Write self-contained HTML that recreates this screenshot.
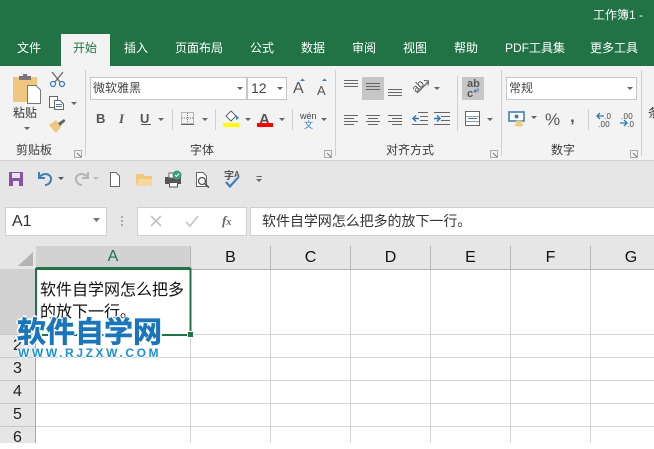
<!DOCTYPE html>
<html><head><meta charset="utf-8">
<style>
html,body{margin:0;padding:0}
body{width:654px;height:443px;position:relative;overflow:hidden;background:#fff;font-family:"Liberation Sans","Noto Sans CJK SC",sans-serif;color:#333}
.a{position:absolute}
.t{position:absolute;white-space:nowrap;line-height:1}
.tab{color:#fff;font-size:12px;top:42px}
.g{color:#3a3a3a;font-size:12px;top:144px}
.ch{position:absolute;top:246px;height:23px;line-height:23px;text-align:center;font-size:16px;color:#111;background:#e6e6e6;border-right:1px solid #b5b5b5;box-sizing:border-box}
.rh{position:absolute;left:0;width:36px;text-align:center;font-size:16px;color:#222;background:#e6e6e6;border-bottom:1px solid #c8c8c8;box-sizing:border-box;border-right:1px solid #a8a8a8}
svg{position:absolute;left:0;top:0}
</style></head><body>
<div class="a" style="left:0;top:0;width:654px;height:66px;background:#217346"></div>
<div class="a" style="left:61px;top:34px;width:49px;height:32px;background:#f3f3f3"></div>
<div class="t" style="left:593px;top:9px;color:#fff;font-size:12px">工作簿1 -</div>
<div class="t tab" style="left:17px">文件</div>
<div class="t tab" style="left:73px;color:#217346">开始</div>
<div class="t tab" style="left:124px">插入</div>
<div class="t tab" style="left:175px">页面布局</div>
<div class="t tab" style="left:250px">公式</div>
<div class="t tab" style="left:301px">数据</div>
<div class="t tab" style="left:352px">审阅</div>
<div class="t tab" style="left:403px">视图</div>
<div class="t tab" style="left:454px">帮助</div>
<div class="t tab" style="left:505px">PDF工具集</div>
<div class="t tab" style="left:590px">更多工具</div>

<div class="a" style="left:0;top:66px;width:654px;height:94px;background:#f3f3f3"></div>
<div class="a" style="left:0;top:160px;width:654px;height:86px;background:#e6e6e6;border-top:1px solid #d2d2d2;box-sizing:border-box"></div>

<!-- font boxes -->
<div class="a" style="left:90px;top:77px;width:157px;height:23px;background:#fff;border:1px solid #c6c6c6;box-sizing:border-box"></div>
<div class="a" style="left:247px;top:77px;width:40px;height:23px;background:#fff;border:1px solid #c6c6c6;box-sizing:border-box"></div>
<div class="t" style="left:93px;top:82px;font-size:12px;color:#444">微软雅黑</div>
<div class="t" style="left:251px;top:81px;font-size:14px;color:#444">12</div>
<div class="a" style="left:506px;top:77px;width:131px;height:23px;background:#fff;border:1px solid #c6c6c6;box-sizing:border-box"></div>
<div class="t" style="left:509px;top:82px;font-size:12px;color:#444">常规</div>
<div class="a" style="left:362px;top:77px;width:22px;height:23px;background:#c6c6c6"></div>
<div class="a" style="left:462px;top:77px;width:22px;height:23px;background:#c6c6c6"></div>

<div class="t" style="left:13px;top:107px;font-size:12px;color:#333">粘贴</div>
<div class="t g" style="left:16px">剪贴板</div>
<div class="t g" style="left:190px">字体</div>
<div class="t g" style="left:386px">对齐方式</div>
<div class="t g" style="left:551px">数字</div>
<div class="t" style="left:648px;top:107px;font-size:12px;color:#333">条</div>

<div class="t" style="left:96px;top:112px;font-size:13px;font-weight:bold;color:#555">B</div>
<div class="t" style="left:119px;top:112px;font-size:13px;font-style:italic;font-weight:bold;font-family:'Liberation Serif',serif;color:#555">I</div>
<div class="t" style="left:140px;top:112px;font-size:13px;font-weight:bold;color:#555">U</div>
<div class="t" style="left:293px;top:81px;font-size:16px;color:#555">A</div>
<div class="t" style="left:317px;top:84px;font-size:13px;color:#555">A</div>
<div class="t" style="left:259px;top:112px;font-size:15px;font-weight:bold;color:#555">A</div>
<div class="t" style="left:300px;top:112px;font-size:9px;color:#444">wén</div>
<div class="t" style="left:304px;top:121px;font-size:9px;color:#2b79b8">文</div>
<div class="t" style="left:467px;top:79px;font-size:11px;font-weight:bold;color:#555;line-height:10px;white-space:pre">ab
c</div>
<div class="t" style="left:545px;top:111px;font-size:17px;color:#555">%</div>
<div class="t" style="left:570px;top:108px;font-size:17px;font-weight:bold;color:#555">,</div>
<div class="t" style="left:604px;top:113px;font-size:8px;color:#444;letter-spacing:.3px">.0</div>
<div class="t" style="left:598px;top:121px;font-size:8px;color:#444;letter-spacing:.3px">.00</div>
<div class="t" style="left:621px;top:113px;font-size:8px;color:#444;letter-spacing:.3px">.00</div>
<div class="t" style="left:627px;top:121px;font-size:8px;color:#444;letter-spacing:.3px">.0</div>
<div class="t" style="left:224px;top:172px;font-size:10px;font-weight:bold;color:#555">字</div>
<div class="t" style="left:234px;top:171px;font-size:8px;font-weight:bold;color:#555">A</div>

<!-- formula bar -->
<div class="a" style="left:5px;top:207px;width:102px;height:29px;background:#fff;border:1px solid #cfcfcf;box-sizing:border-box"></div>
<div class="t" style="left:12px;top:214px;font-size:16px;color:#333">A1</div>
<div class="a" style="left:137px;top:207px;width:110px;height:29px;background:#fff;border:1px solid #cfcfcf;box-sizing:border-box"></div>
<div class="a" style="left:250px;top:207px;width:404px;height:29px;background:#fff;border:1px solid #cfcfcf;border-right:0;box-sizing:border-box"></div>
<div class="t" style="left:262px;top:214px;font-size:14px;color:#333;letter-spacing:-.05px">软件自学网怎么把多的放下一行。</div>
<div class="t" style="left:222px;top:214px;font-size:13px;font-style:italic;font-weight:bold;font-family:'Liberation Serif',serif;color:#666">f<span style="font-size:10px">x</span></div>

<!-- sheet -->
<div class="a" style="left:0;top:246px;width:654px;height:197px;background:#fff"></div>
<div class="a" style="left:0;top:246px;width:36px;height:23px;background:#e6e6e6"></div>
<div class="ch" style="left:36px;width:155px;background:#d2d2d2;color:#217346;border-bottom:2px solid #217346;line-height:22px">A</div>
<div class="ch" style="left:191px;width:80px">B</div>
<div class="ch" style="left:271px;width:80px">C</div>
<div class="ch" style="left:351px;width:80px">D</div>
<div class="ch" style="left:431px;width:80px">E</div>
<div class="ch" style="left:511px;width:80px">F</div>
<div class="ch" style="left:591px;width:80px;border-right:0">G</div>
<div class="a" style="left:0;top:269px;width:654px;height:1px;background:#b5b5b5"></div>
<div class="rh" style="top:269px;height:66px;background:#d2d2d2"></div>
<div class="rh" style="top:335px;height:23px;line-height:22px">2</div>
<div class="rh" style="top:358px;height:23px;line-height:22px">3</div>
<div class="rh" style="top:381px;height:23px;line-height:22px">4</div>
<div class="rh" style="top:404px;height:23px;line-height:22px">5</div>
<div class="rh" style="top:427px;height:16px;line-height:22px;border-bottom:0">6</div>

<svg width="654" height="443" viewBox="0 0 654 443" fill="none">
<!-- gridlines -->
<g stroke="#d4d4d4"><path d="M36 334.500H654M36 357.500H654M36 380.500H654M36 403.500H654M36 426.500H654"/><path d="M190.500 270V443M270.500 270V443M350.500 270V443M430.500 270V443M510.500 270V443M590.500 270V443"/></g>
<!-- corner triangle -->
<path d="M33 252V266H18Z" fill="#b4b4b4"/>
<!-- ribbon separators -->
<g stroke="#d0d0d0"><path d="M85.500 70V156M335.500 70V156M501.500 70V156M641.500 70V156"/><path d="M172.500 109V130M215.500 109V130M292.500 109V130M457.500 76V131M588.500 109V130"/></g>
<path d="M0 160.500H654" stroke="#d2d2d2"/>
<!-- clipboard -->
<path d="M13 77H37V102H13Z" fill="#efc77e"/>
<rect x="19" y="76" width="12" height="4" fill="#777"/><rect x="23" y="74" width="4" height="3" fill="#777"/>
<path d="M27.500 85.500H36L40.500 90V103.500H27.500Z" fill="#fff" stroke="#777"/>
<!-- scissors -->
<g stroke="#666" stroke-width="1.300"><path d="M52 72L60 82M63 72L55 82"/></g>
<circle cx="53" cy="84" r="2.500" stroke="#3f7fb8" stroke-width="1.300"/><circle cx="62" cy="84" r="2.500" stroke="#3f7fb8" stroke-width="1.300"/>
<!-- copy -->
<rect x="49.500" y="96.500" width="8" height="11" fill="#fff" stroke="#666"/><path d="M54.500 100.500H60L63.500 104V109.500H54.500Z" fill="#fff" stroke="#666"/><path d="M56 104.500H62M56 106.500H62" stroke="#3f7fb8"/>
<!-- brush -->
<path d="M49 125L56 120L61 127L56 133Z" fill="#efc77e"/><path d="M58 123L64 119L65.500 121L60 126Z" fill="#666"/>
<!-- small carets -->
<g fill="#666">
<path d="M24 127h6l-3 3zM71 102h6l-3 3zM237 87h6l-3 3zM277 87h6l-3 3zM158 118h6l-3 3zM202 118h6l-3 3zM245 118h6l-3 3zM279 118h6l-3 3zM321 118h6l-3 3zM627 87h6l-3 3zM487 118h6l-3 3zM531 116h6l-3 3z"/>
</g>
<path d="M93 218h7l-3.500 4z" fill="#777"/>
<!-- font grow/shrink -->
<path d="M300 81l2.500-2.500 2.500 2.500zM322 81l2.500-2.500 2.500 2.500z" fill="#3f7fb8"/>
<!-- border icon -->
<rect x="181.500" y="112.500" width="12" height="11" stroke="#777" stroke-dasharray="1 1"/><path d="M187.500 113V123M182 118H193" stroke="#777" stroke-dasharray="1 1"/><path d="M181 124.500H194" stroke="#666"/>
<path d="M141 124.500H151" stroke="#555"/>
<!-- fill -->
<path d="M226 116L231 111L236 116L231 121Z" fill="#fff" stroke="#666"/><path d="M236 115L239 118L236 120Z" fill="#3f7fb8"/>
<rect x="223" y="123" width="16" height="4" fill="#ffff00"/>
<rect x="257" y="123" width="16" height="4" fill="#ff0000"/>
<!-- align -->
<g stroke="#666"><path d="M344 80.500H358M344 83.500H358M344 86.500H358"/><path d="M366 83.500H380M366 86.500H380M366 89.500H380"/><path d="M388 89.500H402M388 92.500H402M388 95.500H402"/>
<path d="M344 115.500H358M344 118.500H354M344 121.500H358M344 124.500H354"/><path d="M366 115.500H380M368 118.500H378M366 121.500H380M368 124.500H378"/><path d="M388 115.500H402M392 118.500H402M388 121.500H402M392 124.500H402"/>
<path d="M418 112.500H428M420 116.500H428M420 120.500H428M412 124.500H428"/><path d="M434 112.500H450M441 116.500H450M441 120.500H450M434 124.500H450"/></g>
<g stroke="#2b79b8" stroke-width="1.500"><path d="M413 118.500H419M416 115.500L413 118.500L416 121.500"/><path d="M434 118.500H440M437 115.500L440 118.500L437 121.500"/></g>
<!-- orientation -->
<path d="M417 93L428 82" stroke="#555" stroke-width="1.200"/><path d="M424 80.500L428.500 81L428 85.500" stroke="#555"/>
<text transform="translate(416 93) rotate(-45)" font-family="Liberation Sans" font-size="11" fill="#555">ab</text>
<path d="M434 87h6l-3 3z" fill="#666"/>
<!-- wrap arrow -->
<path d="M478 88V91H474M476 89.500L474 91L476 92.500" stroke="#3f7fb8"/>
<!-- merge -->
<rect x="465.500" y="111.500" width="14" height="14" fill="#fff" stroke="#666"/><path d="M466 116.500H479M466 121.500H479" stroke="#999"/><path d="M468 118.500H477" stroke="#2b79b8"/>
<!-- currency -->
<rect x="509" y="112" width="15" height="9" fill="#fff" stroke="#3f7fb8" stroke-width="1.600"/><circle cx="516.500" cy="116.500" r="2" fill="#3f7fb8"/>
<ellipse cx="519" cy="122" rx="4.500" ry="1.500" fill="#efc77e"/><ellipse cx="519" cy="125" rx="4.500" ry="1.500" fill="#efc77e"/>
<!-- dec arrows -->
<g stroke="#2b79b8" stroke-width="1.300"><path d="M597 116H604M600 113L597 116L600 119"/><path d="M620 123H627M624 120L627 123L624 126"/></g>
<!-- launchers -->
<g stroke="#777"><path d="M74.500 150.500H81.500V157.500H74.500Z" stroke="#aaa"/><path d="M77 153L81 157"/><path d="M324.500 150.500H331.500V157.500H324.500Z" stroke="#aaa"/><path d="M327 153L331 157"/><path d="M490.500 150.500H497.500V157.500H490.500Z" stroke="#aaa"/><path d="M493 153L497 157"/><path d="M630.500 150.500H637.500V157.500H630.500Z" stroke="#aaa"/><path d="M633 153L637 157"/></g>
<!-- QAT -->
<rect x="9" y="172" width="14" height="14" fill="#8a53a8"/><rect x="12" y="173" width="8" height="5" fill="#e6e6e6"/><rect x="13" y="181" width="6" height="5" fill="#e6e6e6"/>
<path d="M39 172V178H45" stroke="#3f7fb8" stroke-width="2"/><path d="M39 178C42 172 52 173 51 180C50 184 47 185 45 185" stroke="#3f7fb8" stroke-width="2"/>
<path d="M58 177h6l-3 3z" fill="#555"/>
<path d="M88 178C85 172 75 173 76 180C77 184 80 185 82 185M88 172V178H82" stroke="#b5b5b5" stroke-width="2"/>
<path d="M93 177h6l-3 3z" fill="#bbb"/>
<path d="M110.500 172.500H116L119.500 176V186.500H110.500Z" fill="#fff" stroke="#666"/>
<path d="M136 174H143L145 176H152V186H136Z" fill="#f0c77f"/><path d="M136 186L139 179H153L151 186Z" fill="#f6d79f"/>
<rect x="165" y="177" width="16" height="7" fill="#555"/><rect x="169" y="173" width="9" height="5" fill="#fff" stroke="#666"/><rect x="169.500" y="182.500" width="8" height="4.500" fill="#fff" stroke="#555"/><circle cx="177" cy="175" r="4.500" fill="#3f9a78"/><path d="M175 175L176.500 176.500L179 173.500" stroke="#fff"/>
<path d="M196.500 172.500H203L206.500 176V186.500H196.500Z" fill="#fff" stroke="#666"/><circle cx="202" cy="181" r="3.500" fill="#fff" stroke="#555" stroke-width="1.300"/><path d="M204.500 183.500L209 187.500" stroke="#555" stroke-width="1.600"/>
<path d="M226 182L230 186.500L238.500 177" stroke="#3f7fb8" stroke-width="2.200"/>
<path d="M256.500 176.500H262" stroke="#666"/><path d="M256 179h6l-3 3z" fill="#666"/>
<!-- fx bar -->
<g stroke="#c3c3c3" stroke-width="1.600"><path d="M151 216L161 226M161 216L151 226"/><path d="M186 222L190 226L198 216"/></g>
<g fill="#a8a8a8"><rect x="121" y="216" width="2" height="2"/><rect x="121" y="220" width="2" height="2"/><rect x="121" y="224" width="2" height="2"/></g>
<!-- selection -->
<rect x="36" y="269" width="154.500" height="66" stroke="#217346" stroke-width="2"/>
<rect x="187.500" y="331.500" width="6" height="6" fill="#217346" stroke="#fff"/>
</svg>

<!-- cell text -->
<div class="t" style="left:40px;top:283px;font-size:16px;color:#111">软件自学网怎么把多</div>
<div class="t" style="left:40px;top:305px;font-size:16px;color:#111">的放下一行。</div>

<!-- watermark -->
<div class="t" style="left:17px;top:316px;font-size:29px;font-weight:bold;color:#1a75bb;-webkit-text-stroke:.6px #1a75bb;text-shadow:1px 0 #fff,-1px 0 #fff,0 1px #fff,0 -1px #fff,2px 0 #fff,-2px 0 #fff,0 2px #fff,0 -2px #fff;font-family:'Noto Sans CJK SC',sans-serif">软件自学网</div>
<div class="t" style="left:18px;top:347px;font-size:12px;font-weight:bold;letter-spacing:2.600px;color:#1c90d8;text-shadow:1px 0 #fff,-1px 0 #fff,0 1px #fff,0 -1px #fff">WWW.RJZXW.COM</div>
</body></html>
